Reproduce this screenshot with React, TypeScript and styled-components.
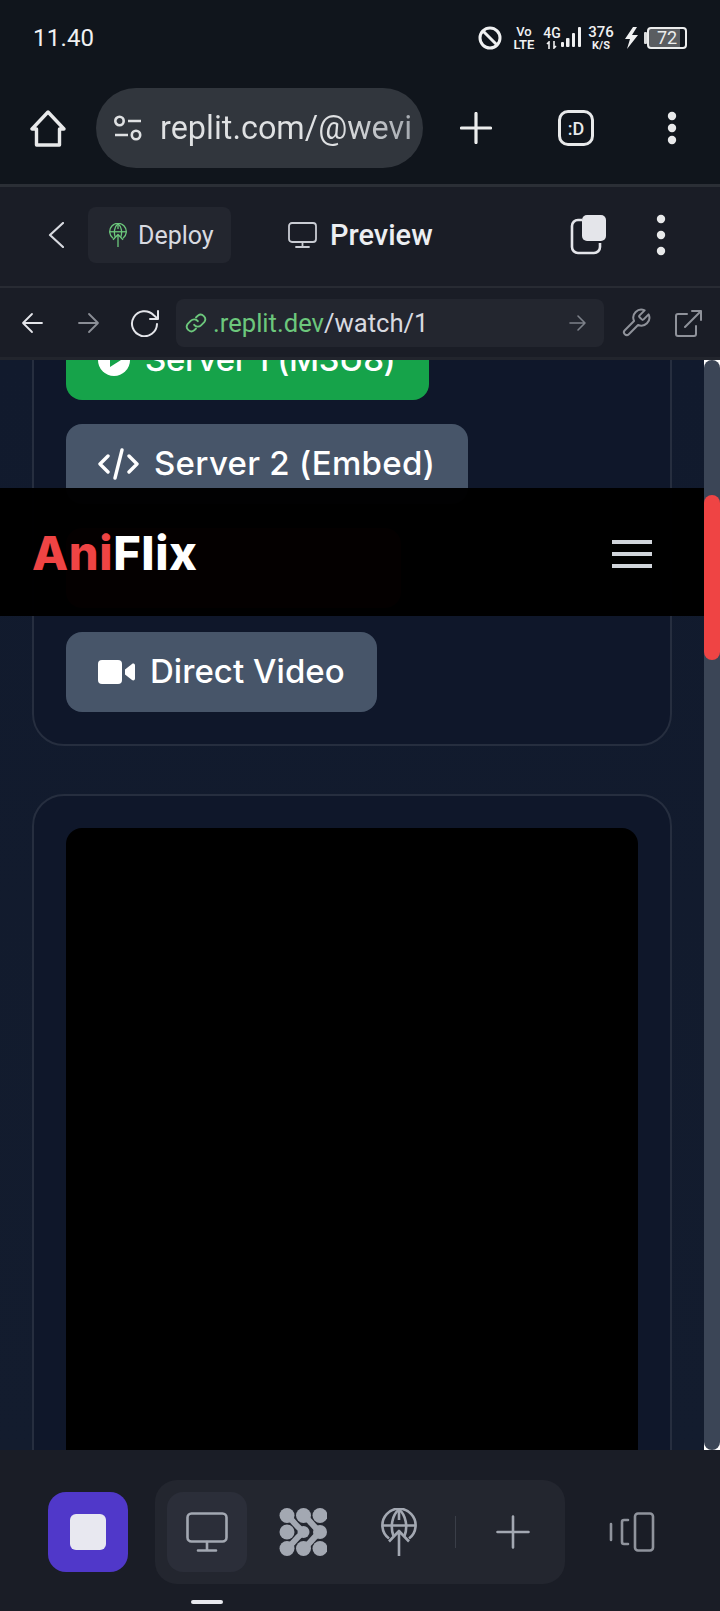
import styled, { createGlobalStyle } from 'styled-components'

const GlobalStyle = createGlobalStyle`
  html, body {
    margin: 0;
    padding: 0;
    background: #10151c;
  }
  * {
    box-sizing: border-box;
  }
`

const Phone = styled.div`
  width: 720px;
  height: 1611px;
  display: flex;
  flex-direction: column;
  overflow: hidden;
  font-family: 'Roboto', 'Liberation Sans', sans-serif;
`

const Glyph = styled.svg<{ $w: number; $h: number; $ml?: number; $mr?: number; $mt?: number }>`
  display: block;
  flex: none;
  width: ${(p) => p.$w}px;
  height: ${(p) => p.$h}px;
  margin: ${(p) => p.$mt ?? 0}px ${(p) => p.$mr ?? 0}px 0 ${(p) => p.$ml ?? 0}px;
`

// Android status bar
const StatusBar = styled.div`
  height: 72px;
  flex: none;
  display: flex;
  align-items: center;
  padding: 4px 0 0 33px;
  background: #10151c;
  color: #f0f1f2;
`

const Clock = styled.span`
  font-size: 24px;
  letter-spacing: 0.2px;
  width: 445px;
`

const Stacked = styled.span<{ $ml: number; $w: number }>`
  display: flex;
  flex-direction: column;
  align-items: center;
  gap: 2px;
  flex: none;
  width: ${(p) => p.$w}px;
  margin-left: ${(p) => p.$ml}px;
`

const StackedLine = styled.span<{ $size: number; $weight: number }>`
  font-size: ${(p) => p.$size}px;
  font-weight: ${(p) => p.$weight};
  line-height: ${(p) => p.$size - 2}px;
`

const Battery = styled.span`
  width: 40px;
  height: 22px;
  flex: none;
  display: flex;
  align-items: center;
  justify-content: center;
  border: 2px solid #eceded;
  border-radius: 4px;
  font-size: 18px;
  line-height: 18px;
  background: linear-gradient(to right, #5a5d61 0 86%, transparent 86%);
  color: #eceded;
`

// Chrome toolbar
const BrowserBar = styled.div`
  height: 115px;
  flex: none;
  display: flex;
  align-items: center;
  padding-left: 30px;
  background: #10151c;
  border-bottom: 3px solid #2b2f36;
`

const AddressPill = styled.div`
  width: 327px;
  height: 80px;
  flex: none;
  margin-left: 30px;
  display: flex;
  align-items: center;
  padding-left: 17px;
  border-radius: 40px;
  background: #31363d;
`

const AddressText = styled.span`
  margin-left: 17px;
  font-size: 32.4px;
  white-space: nowrap;
  background: linear-gradient(to right, #dfe1e3 70%, #a5aab0 100%);
  -webkit-background-clip: text;
  background-clip: text;
  color: transparent;
`

const TabCount = styled.div`
  width: 36px;
  height: 36px;
  flex: none;
  margin-left: 66px;
  display: flex;
  align-items: center;
  justify-content: center;
  border: 3px solid #e8e9ea;
  border-radius: 10px;
  color: #e8e9ea;
  font-size: 18px;
  font-weight: 500;
`

// Replit header
const ReplitHeader = styled.div`
  height: 101px;
  flex: none;
  display: flex;
  align-items: center;
  padding: 0 0 3px 48px;
  background: #1a1d26;
  border-bottom: 2px solid #282b33;
`

const DeployChip = styled.div`
  width: 143px;
  height: 56px;
  flex: none;
  margin-left: 24px;
  display: flex;
  align-items: center;
  padding-left: 21px;
  border-radius: 8px;
  background: #23262f;
`

const DeployLabel = styled.span`
  margin-left: 11px;
  font-size: 25px;
  color: #d8dae0;
`

const PreviewLabel = styled.span`
  margin-left: 13px;
  width: 104px;
  font-size: 29px;
  font-weight: 500;
  color: #eceef2;
`

// Replit webview url row
const UrlRow = styled.div`
  height: 72px;
  flex: none;
  display: flex;
  align-items: center;
  padding: 1px 0 0 21px;
  background: #1a1d26;
  border-bottom: 3px solid #22252d;
`

const UrlBox = styled.div`
  width: 428px;
  height: 48px;
  flex: none;
  margin-left: 16px;
  display: flex;
  align-items: center;
  padding-left: 9px;
  border-radius: 8px;
  background: #23262f;
  font-size: 25.6px;
`

const UrlHost = styled.span`
  margin-left: 6px;
  color: #6cc77c;
`

const UrlPath = styled.span`
  flex: 1;
  color: #d8dae0;
`

// Page inside the webview
const Viewport = styled.div`
  flex: 1;
  min-height: 0;
  display: flex;
  position: relative;
  overflow: hidden;
  background: linear-gradient(#111a2d, #131c2e);
`

const PageScroll = styled.div`
  flex: 1;
  min-width: 0;
  margin-top: -74px;
  padding: 0 32px;
  display: flex;
  flex-direction: column;
  gap: 48px;
`

const Card = styled.section`
  flex: none;
  display: flex;
  flex-direction: column;
  align-items: flex-start;
  gap: 24px;
  padding: 32px;
  border: 2px solid #262e3f;
  border-radius: 32px;
  background: #0f172a;
`

const ServerButton = styled.button<{ $bg: string; $w: number }>`
  width: ${(p) => p.$w}px;
  height: 80px;
  flex: none;
  display: flex;
  align-items: center;
  gap: 15px;
  padding: 0 32px;
  border: 0;
  border-radius: 16px;
  background: ${(p) => p.$bg};
  color: #fff;
  font-family: 'Inter', 'Liberation Sans', sans-serif;
  font-size: 33px;
  font-weight: 500;
  white-space: nowrap;
`

const ServerLabel = styled.span<{ $spacing: number }>`
  margin-bottom: 3px;
  letter-spacing: ${(p) => p.$spacing}px;
`

const Player = styled.div`
  width: 100%;
  height: 900px;
  border-radius: 16px;
  background: #000;
`

const ScrollTrack = styled.div`
  width: 16px;
  flex: none;
  position: relative;
  background: #fff;
`

const TrackBody = styled.div`
  height: 100%;
  border-radius: 8px;
  background: #3b4556;
`

const ScrollThumb = styled.div`
  position: absolute;
  top: 135px;
  left: 0;
  width: 16px;
  height: 165px;
  border-radius: 8px;
  background: #ef4444;
`

const SiteHeader = styled.header`
  position: absolute;
  top: 128px;
  left: 0;
  right: 16px;
  height: 128px;
  display: flex;
  align-items: center;
  justify-content: space-between;
  padding: 0 52px 0 32px;
  background: rgba(0, 0, 0, 0.985);
`

const Logo = styled.div`
  font-family: 'Inter', 'Liberation Sans', sans-serif;
  font-size: 47px;
  font-weight: 800;
  letter-spacing: 0.6px;
  color: #fff;
`

const LogoAccent = styled.span`
  color: #ef4444;
`

const Hamburger = styled.div`
  width: 40px;
  margin-top: 4px;
  display: flex;
  flex-direction: column;
  gap: 8px;
`

const HamburgerBar = styled.span`
  height: 4px;
  background: #d1d5db;
`

// Replit bottom dock
const Dock = styled.div`
  height: 161px;
  flex: none;
  position: relative;
  display: flex;
  align-items: flex-start;
  padding: 30px 0 0 48px;
  background: #1a1d26;
`

const StopButton = styled.div`
  width: 80px;
  height: 80px;
  flex: none;
  margin-top: 12px;
  display: flex;
  align-items: center;
  justify-content: center;
  border-radius: 18px;
  background: #5038c9;
`

const StopSquare = styled.span`
  width: 36px;
  height: 36px;
  border-radius: 6px;
  background: #e8e8f0;
`

const DockGroup = styled.div`
  width: 410px;
  height: 104px;
  flex: none;
  margin-left: 27px;
  display: flex;
  align-items: center;
  gap: 16px;
  padding-left: 12px;
  border-radius: 22px;
  background: #23262f;
`

const DockTab = styled.div<{ $active?: boolean }>`
  width: 80px;
  height: 80px;
  flex: none;
  display: flex;
  align-items: center;
  justify-content: center;
  border-radius: 16px;
  background: ${(p) => (p.$active ? '#2b2e39' : 'transparent')};
`

const DockDivider = styled.span`
  width: 1px;
  height: 32px;
  flex: none;
  background: #3a3e48;
`

const DockIndicator = styled.span`
  position: absolute;
  left: 191px;
  bottom: 7px;
  width: 32px;
  height: 4px;
  border-radius: 2px;
  background: #e8e9ee;
`

const GlobeUpload = ({ w, h, color }: { w: number; h: number; color: string }) => (
  <Glyph $w={w} $h={h} viewBox="0 0 36 48" fill="none" stroke={color} strokeWidth="2.6" strokeLinejoin="round">
    <path d="M8 30.5A16.6 16.6 0 1 1 28 30.5" />
    <path d="M1.5 17.5h33" />
    <path d="M12.5 28C9 19 11 7 18 1.5c7 5.5 9 17.5 5.5 26.5" />
    <path d="M18 1.5V12" />
    <path d="M18 48V24M8 33.5 18 23l10 10.5" />
  </Glyph>
)

const Monitor = ({ w, h, color, sw }: { w: number; h: number; color: string; sw: number }) => (
  <Glyph $w={w} $h={h} viewBox="0 0 42 40" fill="none" stroke={color} strokeWidth={sw} strokeLinecap="round">
    <rect x="1.5" y="1.5" width="39" height="28" rx="4" />
    <path d="M21 30v8M12 38.5h18" />
  </Glyph>
)

const Kebab = ({ ml, gap = 13 }: { ml: number; gap?: number }) => (
  <Glyph $w={10} $h={gap * 2 + 10} $ml={ml} viewBox={`0 0 10 ${gap * 2 + 10}`} fill="#e8e9ea">
    <circle cx="5" cy="5" r="4.2" />
    <circle cx="5" cy={gap + 5} r="4.2" />
    <circle cx="5" cy={gap * 2 + 5} r="4.2" />
  </Glyph>
)

export default function App() {
  return (
    <Phone>
      <GlobalStyle />

      <StatusBar>
        <Clock>11.40</Clock>
        <Glyph $w={24} $h={24} viewBox="0 0 24 24" fill="none" stroke="#f0f1f2" strokeWidth="3">
          <circle cx="12" cy="12" r="10" />
          <path d="M5 5l14 14" />
        </Glyph>
        <Stacked $ml={11} $w={22}>
          <StackedLine $size={13} $weight={500}>Vo</StackedLine>
          <StackedLine $size={13} $weight={600}>LTE</StackedLine>
        </Stacked>
        <Stacked $ml={8} $w={18}>
          <StackedLine $size={14} $weight={500}>4G</StackedLine>
          <Glyph $w={12} $h={8} viewBox="0 0 12 8" fill="none" stroke="#f0f1f2" strokeWidth="1.6">
            <path d="M3 8V1L1 3M8 0v7l2-2" />
          </Glyph>
        </Stacked>
        <Glyph $w={20} $h={22} viewBox="0 0 20 22" fill="#f0f1f2">
          <rect x="0" y="15" width="3" height="5" rx="1" />
          <rect x="5" y="11" width="3.5" height="9" rx="1" />
          <rect x="11" y="6" width="3" height="14" rx="1" />
          <rect x="17" y="0" width="3" height="20" rx="1" />
        </Glyph>
        <Stacked $ml={8} $w={24}>
          <StackedLine $size={15} $weight={500}>376</StackedLine>
          <StackedLine $size={11} $weight={700}>K/S</StackedLine>
        </Stacked>
        <Glyph $w={15} $h={24} $ml={11} viewBox="0 0 15 24" fill="#f0f1f2">
          <path d="M9 1 1 13h5l-3 10 11-14H8l5-8z" />
        </Glyph>
        <Glyph $w={4} $h={12} $ml={4} viewBox="0 0 4 12" fill="#d9dadb">
          <rect x="1" width="3" height="12" rx="1" />
        </Glyph>
        <Battery>72</Battery>
      </StatusBar>

      <BrowserBar>
        <Glyph $w={36} $h={37} viewBox="0 0 36 37" fill="none" stroke="#e8e9ea" strokeWidth="3.4" strokeLinejoin="round">
          <path d="M18 2 2 19h4.5v16h23V19H34z" />
        </Glyph>
        <AddressPill>
          <Glyph $w={30} $h={26} viewBox="0 0 30 26" fill="none" stroke="#dfe1e3" strokeWidth="2.6">
            <circle cx="6.5" cy="6" r="4.2" />
            <path d="M15 6h13M2 20h13" />
            <circle cx="23" cy="20" r="4.2" />
          </Glyph>
          <AddressText>replit.com/@wevi</AddressText>
        </AddressPill>
        <Glyph $w={32} $h={32} $ml={37} viewBox="0 0 32 32" fill="none" stroke="#eceded" strokeWidth="3.2" strokeLinecap="round">
          <path d="M16 1.5v29M1.5 16h29" />
        </Glyph>
        <TabCount>:D</TabCount>
        <Kebab ml={73} gap={12} />
      </BrowserBar>

      <ReplitHeader>
        <Glyph $w={16} $h={26} viewBox="0 0 16 26" fill="none" stroke="#d8dae0" strokeWidth="2.2" strokeLinecap="round" strokeLinejoin="round">
          <path d="M15 1 2 13l13 12" />
        </Glyph>
        <DeployChip>
          <GlobeUpload w={18} h={24} color="#6cc77c" />
          <DeployLabel>Deploy</DeployLabel>
        </DeployChip>
        <Glyph $w={29} $h={26} $ml={57} viewBox="0 0 29 26" fill="none" stroke="#c9ccd3" strokeWidth="1.8" strokeLinecap="round">
          <rect x="1" y="1" width="27" height="19" rx="3" />
          <path d="M14.5 20v5M8 25h13" />
        </Glyph>
        <PreviewLabel>Preview</PreviewLabel>
        <Glyph $w={37} $h={40} $ml={136} viewBox="0 0 37 40" fill="none">
          <path d="M12 5H8a6 6 0 0 0-6 6v21a6 6 0 0 0 6 6h16a6 6 0 0 0 6-6v-4" stroke="#e4e5ea" strokeWidth="2.6" />
          <rect x="12" y="0" width="24" height="26" rx="5" fill="#e4e5ea" />
        </Glyph>
        <Kebab ml={49} gap={16} />
      </ReplitHeader>

      <UrlRow>
        <Glyph $w={22} $h={22} viewBox="0 0 22 22" fill="none" stroke="#e4e5ea" strokeWidth="1.8" strokeLinecap="round" strokeLinejoin="round">
          <path d="M21 11H2M11 2l-9 9 9 9" />
        </Glyph>
        <Glyph $w={22} $h={22} $ml={35} viewBox="0 0 22 22" fill="none" stroke="#8b8e96" strokeWidth="1.8" strokeLinecap="round" strokeLinejoin="round">
          <path d="M1 11h19M11 2l9 9-9 9" />
        </Glyph>
        <Glyph $w={30} $h={28} $ml={30} viewBox="0 0 30 28" fill="none" stroke="#e4e5ea" strokeWidth="2" strokeLinecap="round" strokeLinejoin="round">
          <path d="M27 15a12.5 12.5 0 1 1-3.5-9L28 10M28 2v8h-8" />
        </Glyph>
        <UrlBox>
          <Glyph $w={22} $h={24} viewBox="0 0 24 24" fill="none" stroke="#6cc77c" strokeWidth="2" strokeLinecap="round" strokeLinejoin="round">
            <path d="M10 14a5 5 0 0 0 7.5.5l3.500-3.500a5 5 0 0 0-7-7l-2 2" />
            <path d="M14 10a5 5 0 0 0-7.5-.5L3 13a5 5 0 0 0 7 7l2-2" />
          </Glyph>
          <UrlHost>.replit.dev</UrlHost>
          <UrlPath>/watch/1</UrlPath>
          <Glyph $w={18} $h={18} $mr={17} viewBox="0 0 18 18" fill="none" stroke="#7d818a" strokeWidth="1.6" strokeLinecap="round" strokeLinejoin="round">
            <path d="M1 9h15M9 2l7 7-7 7" />
          </Glyph>
        </UrlBox>
        <Glyph $w={32} $h={32} $ml={16} viewBox="0 0 24 24" fill="none" stroke="#8f929a" strokeWidth="1.5" strokeLinecap="round" strokeLinejoin="round">
          <path d="M14.7 6.3a1 1 0 0 0 0 1.4l1.6 1.6a1 1 0 0 0 1.4 0l3.77-3.77a6 6 0 0 1-7.94 7.94l-6.91 6.91a2.12 2.12 0 0 1-3-3l6.91-6.91a6 6 0 0 1 7.94-7.94z" />
        </Glyph>
        <Glyph $w={27} $h={27} $ml={23} viewBox="0 0 27 27" fill="none" stroke="#8f929a" strokeWidth="2" strokeLinecap="round" strokeLinejoin="round">
          <path d="M12 4H3a2 2 0 0 0-2 2v18a2 2 0 0 0 2 2h16a2 2 0 0 0 2-2v-8" />
          <path d="M10 17 26 1M17 1h9v9" />
        </Glyph>
      </UrlRow>

      <Viewport>
        <PageScroll>
          <Card>
            <ServerButton $bg="#16a34a" $w={363}>
              <Glyph $w={32} $h={32} viewBox="0 0 32 32">
                <circle cx="16" cy="16" r="16" fill="#fff" />
                <path d="M12 9v14l11-7z" fill="#16a34a" />
              </Glyph>
              <ServerLabel $spacing={-0.4}>Server 1 (M3U8)</ServerLabel>
            </ServerButton>
            <ServerButton $bg="#475569" $w={402}>
              <Glyph $w={41} $h={32} viewBox="0 0 41 32" fill="none" stroke="#fff" strokeWidth="3.4" strokeLinecap="round" strokeLinejoin="round">
                <path d="M10 8 2 16l8 8M31 8l8 8-8 8M24 2l-7 28" />
              </Glyph>
              <ServerLabel $spacing={0.3}>Server 2 (Embed)</ServerLabel>
            </ServerButton>
            <ServerButton $bg="#dc2626" $w={335} />
            <ServerButton $bg="#475569" $w={311}>
              <Glyph $w={37} $h={24} viewBox="0 0 37 24" fill="#fff">
                <rect width="24" height="24" rx="4" />
                <path d="M27 9.5 34 4c1-.8 3-.5 3 1.5v13c0 2-2 2.3-3 1.5l-7-5.5z" />
              </Glyph>
              <ServerLabel $spacing={0.05}>Direct Video</ServerLabel>
            </ServerButton>
          </Card>
          <Card>
            <Player />
          </Card>
        </PageScroll>

        <ScrollTrack>
          <TrackBody />
          <ScrollThumb />
        </ScrollTrack>

        <SiteHeader>
          <Logo>
            <LogoAccent>Ani</LogoAccent>Flix
          </Logo>
          <Hamburger>
            <HamburgerBar />
            <HamburgerBar />
            <HamburgerBar />
          </Hamburger>
        </SiteHeader>
      </Viewport>

      <Dock>
        <StopButton>
          <StopSquare />
        </StopButton>
        <DockGroup>
          <DockTab $active>
            <Monitor w={42} h={40} color="#a3a8b2" sw={2.6} />
          </DockTab>
          <DockTab>
            <Glyph $w={48} $h={48} viewBox="0 0 48 48" fill="#a3a8b2" stroke="#a3a8b2" strokeLinecap="round">
              <path d="M8 7.5C14 12 13 14 24.5 24 13 34 14 36 8 40.5" fill="none" strokeWidth="6" />
              <path d="M24.5 7.5C31 12 30 14 41 24 30 34 31 36 24.5 40.5" fill="none" strokeWidth="6" />
              <circle cx="8" cy="7.5" r="7.5" stroke="none" />
              <circle cx="24.5" cy="7.5" r="7.5" stroke="none" />
              <circle cx="41" cy="7.5" r="7.5" stroke="none" />
              <circle cx="8" cy="24" r="7.5" stroke="none" />
              <circle cx="24.5" cy="24" r="6" stroke="none" />
              <circle cx="41" cy="24" r="7" stroke="none" />
              <circle cx="8" cy="40.5" r="7.5" stroke="none" />
              <circle cx="24.5" cy="40.5" r="7.5" stroke="none" />
              <circle cx="41" cy="40.5" r="7.5" stroke="none" />
            </Glyph>
          </DockTab>
          <DockTab>
            <GlobeUpload w={36} h={48} color="#a3a8b2" />
          </DockTab>
          <DockDivider />
          <Glyph $w={34} $h={34} $ml={24} viewBox="0 0 34 34" fill="none" stroke="#a3a8b2" strokeWidth="2.6" strokeLinecap="round">
            <path d="M17 1.5v31M1.5 17h31" />
          </Glyph>
        </DockGroup>
        <Glyph $w={46} $h={40} $ml={44} $mt={32} viewBox="0 0 46 40" fill="none" stroke="#8f939c" strokeWidth="2.6" strokeLinecap="round" strokeLinejoin="round">
          <rect x="26" y="1.5" width="18" height="37" rx="3" />
          <path d="M19 8h-4a2 2 0 0 0-2 2v20a2 2 0 0 0 2 2h4M2 12v16" />
        </Glyph>
        <DockIndicator />
      </Dock>
    </Phone>
  )
}
